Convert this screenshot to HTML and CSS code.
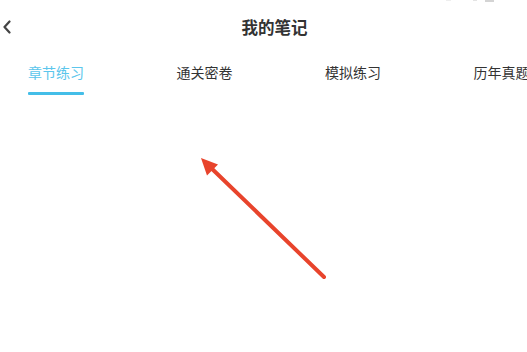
FILE: index.html
```html
<!DOCTYPE html>
<html lang="zh-CN">
<head>
<meta charset="utf-8">
<title>我的笔记</title>
<link rel="stylesheet" href="styles.css">
</head>
<body>
<div class="page">
  <div class="status-hint">
    <span class="hint-a"></span><span class="hint-b"></span><span class="hint-c"></span>
  </div>
  <header class="header">
    <button class="back" aria-label="返回">
      <svg width="10" height="14" viewBox="0 0 10 14"><path d="M7.5 1.5 L2.5 7 L7.5 12.5" fill="none" stroke="#444" stroke-width="2.2" stroke-linecap="round" stroke-linejoin="round"/></svg>
    </button>
    <h1 class="title">我的笔记</h1>
    <span class="spacer"></span>
  </header>
  <nav class="tabs">
    <div class="tab active"><span class="tab-text">章节练习</span><span class="bar"></span></div>
    <div class="tab"><span class="tab-text">通关密卷</span><span class="bar"></span></div>
    <div class="tab"><span class="tab-text">模拟练习</span><span class="bar"></span></div>
    <div class="tab"><span class="tab-text">历年真题</span><span class="bar"></span></div>
  </nav>
  <svg class="arrow" width="527" height="352" viewBox="0 0 527 352">
    <line x1="324" y1="277" x2="207" y2="164" stroke="#e8442c" stroke-width="4" stroke-linecap="round"/>
    <polygon points="201,158 218,164.5 207,175.5" fill="#e8442c"/>
  </svg>
</div>
</body>
</html>
```

FILE: styles.css
```css
* { box-sizing: border-box; }
html, body {
  margin: 0;
  padding: 0;
  background: #fff;
}
body {
  font-family: "Noto Sans CJK SC", "Noto Sans", sans-serif;
  color: #333;
}
.page {
  position: relative;
  width: 527px;
  height: 352px;
  overflow: hidden;
  background: #fff;
}
.status-hint {
  position: absolute;
  top: 0;
  left: 446px;
  display: flex;
  gap: 0;
}
.status-hint span { display: block; height: 1px; }
.hint-a { width: 5px; background: #eee; margin-right: 22px; }
.hint-b { width: 4px; background: #e4e4e4; margin-right: 8px; }
.hint-c { width: 9px; height: 2px !important; background: #d4d4d4; }

.header {
  height: 53px;
  display: grid;
  grid-template-columns: 40px 1fr 18px;
  align-items: center;
}
.back {
  border: 0;
  background: none;
  padding: 0 0 0 2px;
  margin: 0;
  display: flex;
  align-items: center;
  height: 20px;
  cursor: pointer;
}
.title {
  margin: 0;
  text-align: center;
  font-size: 16.5px;
  font-weight: 700;
  color: #333;
  line-height: 20px;
}
.tabs {
  display: flex;
  gap: 92.5px;
  padding: 9px 0 0 28px;
  white-space: nowrap;
}
.tab {
  display: flex;
  flex-direction: column;
  align-items: stretch;
  flex: none;
}
.tab-text {
  font-size: 14px;
  line-height: 20px;
  letter-spacing: 0;
  color: #333;
}
.bar {
  margin-top: 10px;
  height: 3px;
  border-radius: 1px;
  background: transparent;
}
.tab.active .tab-text { color: #5cc6ec; }
.tab.active .bar { background: #44bee8; }

.arrow {
  position: absolute;
  top: 0;
  left: 0;
  pointer-events: none;
}
```
